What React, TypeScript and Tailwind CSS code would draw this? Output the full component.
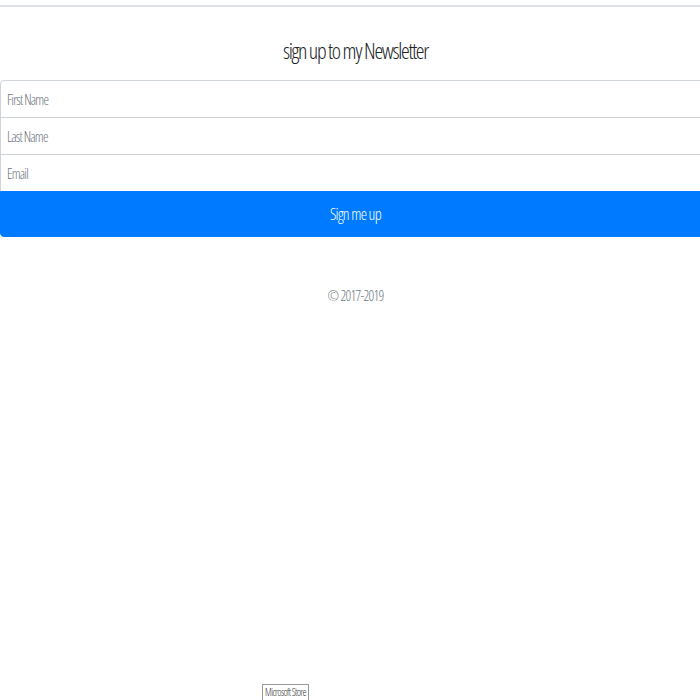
const cond = "font-['Open_Sans',sans-serif] [font-stretch:75%]"

function Field({ placeholder, first }: { placeholder: string; first?: boolean }) {
  return (
    <input
      type="text"
      placeholder={placeholder}
      className={`${cond} block w-full h-[38px] px-[6px] text-[14px] tracking-[-0.8px] font-light text-[#495057] bg-white border border-[#ced4da] outline-none placeholder:text-[#6c757d] ${
        first ? 'rounded-t-[4px]' : '-mt-px'
      }`}
    />
  )
}

export default function App() {
  return (
    <div className="relative w-[700px] h-[700px] overflow-hidden bg-white">
      <div className="h-[5px]" />
      <hr className="border-0 border-t-2 border-[#dee2e6]" />

      <div className="w-[711px]">
        <h2
          className={`${cond} mt-[30px] text-center text-[22px] leading-[27px] font-light tracking-[-1.3px] text-[#212529]`}
        >
          sign up to my Newsletter
        </h2>

        <form className="mt-[16px]" onSubmit={(e) => e.preventDefault()}>
          <Field placeholder="First Name" first />
          <Field placeholder="Last Name" />
          <Field placeholder="Email" />
          <button
            type="submit"
            className={`${cond} block w-full h-[46px] -mt-px bg-[#007bff] border border-[#007bff] rounded-b-[4px] text-white text-[16px] font-light tracking-[-0.7px]`}
          >
            Sign me up
          </button>
        </form>

        <p
          className={`${cond} mt-[48px] text-center text-[14px] font-light tracking-[-0.7px] text-[#6c757d]`}
        >
          © 2017-2019
        </p>
      </div>

      <div
        className={`${cond} absolute left-[262px] top-[684px] h-[20px] px-[2px] border border-[#999] text-[10px] leading-[14px] tracking-[-0.6px] font-light text-[#333] bg-white`}
      >
        Microsoft Store
      </div>
    </div>
  )
}
